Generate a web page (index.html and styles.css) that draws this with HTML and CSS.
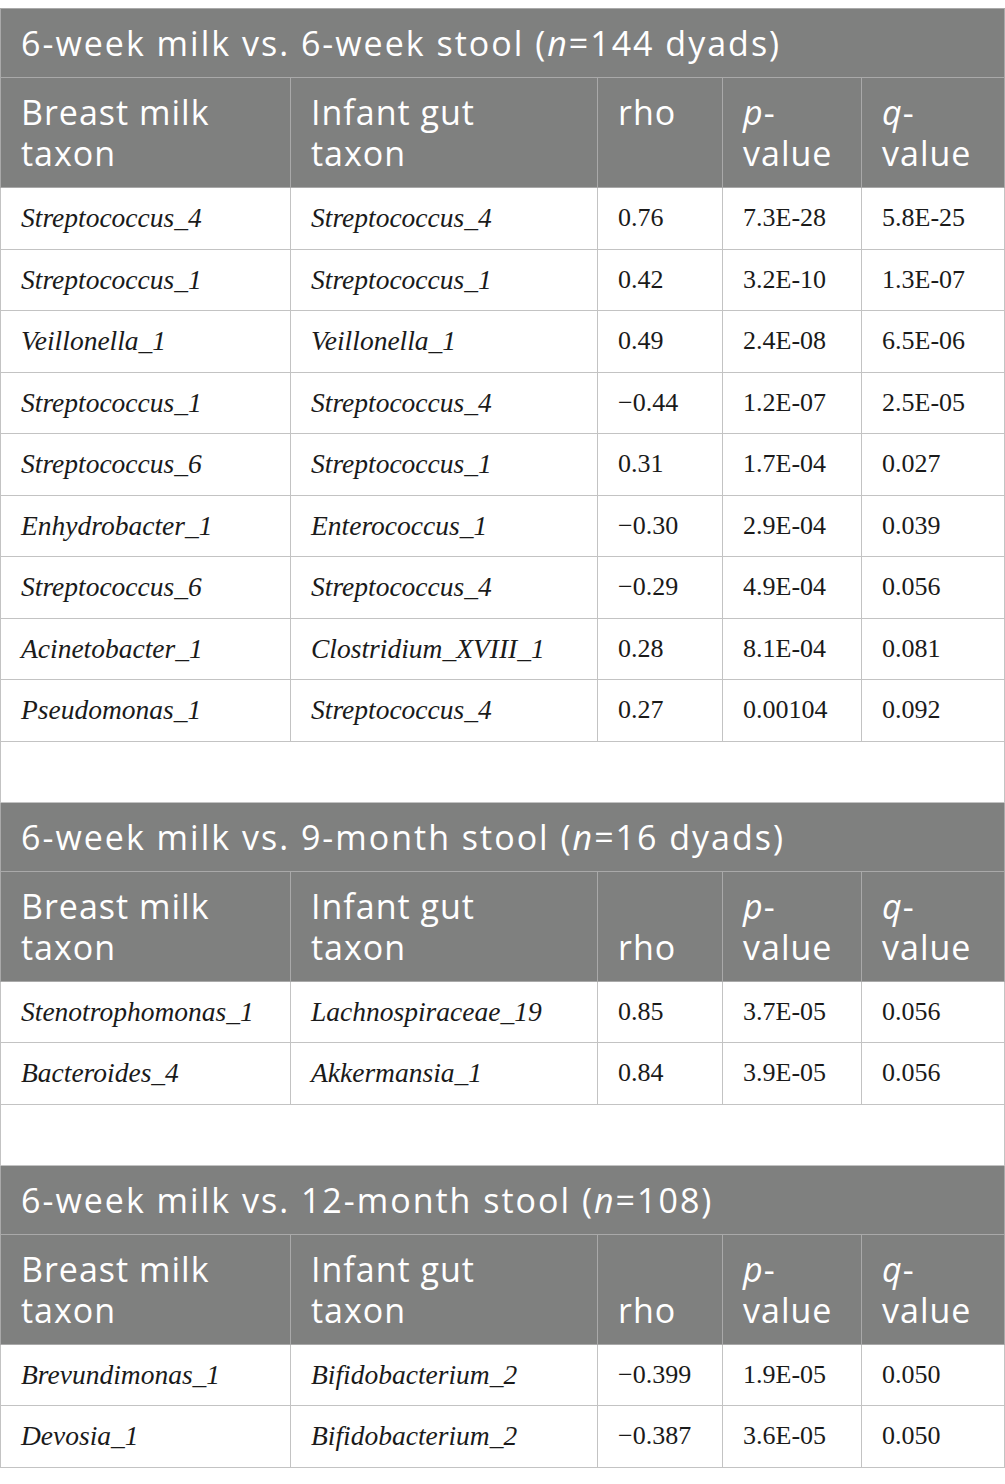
FILE: index.html
```html
<!DOCTYPE html>
<html lang="en">
<head>
    <meta charset="UTF-8">
    <meta name="viewport" content="width=device-width, initial-scale=1.0">
    <title>Milk and stool taxa correlations</title>
    <link rel="stylesheet" href="styles.css">
</head>
<body>

<table class="corr">
    <colgroup>
        <col class="c-milk">
        <col class="c-gut">
        <col class="c-rho">
        <col class="c-p">
        <col class="c-q">
    </colgroup>

    <!-- 6 weeks -->
    <tbody>
        <tr class="title"><th colspan="5">6-week milk vs. 6-week stool (<i>n</i>=144 dyads)</th></tr>
        <tr class="cols">
            <th>Breast milk<br>taxon</th>
            <th>Infant gut<br>taxon</th>
            <th>rho</th>
            <th><i>p</i>-<br>value</th>
            <th><i>q</i>-<br>value</th>
        </tr>
        <tr><td><i>Streptococcus_4</i></td><td><i>Streptococcus_4</i></td><td>0.76</td><td>7.3E-28</td><td>5.8E-25</td></tr>
        <tr><td><i>Streptococcus_1</i></td><td><i>Streptococcus_1</i></td><td>0.42</td><td>3.2E-10</td><td>1.3E-07</td></tr>
        <tr><td><i>Veillonella_1</i></td><td><i>Veillonella_1</i></td><td>0.49</td><td>2.4E-08</td><td>6.5E-06</td></tr>
        <tr><td><i>Streptococcus_1</i></td><td><i>Streptococcus_4</i></td><td>&minus;0.44</td><td>1.2E-07</td><td>2.5E-05</td></tr>
        <tr><td><i>Streptococcus_6</i></td><td><i>Streptococcus_1</i></td><td>0.31</td><td>1.7E-04</td><td>0.027</td></tr>
        <tr><td><i>Enhydrobacter_1</i></td><td><i>Enterococcus_1</i></td><td>&minus;0.30</td><td>2.9E-04</td><td>0.039</td></tr>
        <tr><td><i>Streptococcus_6</i></td><td><i>Streptococcus_4</i></td><td>&minus;0.29</td><td>4.9E-04</td><td>0.056</td></tr>
        <tr><td><i>Acinetobacter_1</i></td><td><i>Clostridium_XVIII_1</i></td><td>0.28</td><td>8.1E-04</td><td>0.081</td></tr>
        <tr><td><i>Pseudomonas_1</i></td><td><i>Streptococcus_4</i></td><td>0.27</td><td>0.00104</td><td>0.092</td></tr>
        <tr class="gap"><td colspan="5"></td></tr>
    </tbody>

    <!-- 9 months -->
    <tbody>
        <tr class="title"><th colspan="5">6-week milk vs. 9-month stool (<i>n</i>=16 dyads)</th></tr>
        <tr class="cols">
            <th>Breast milk<br>taxon</th>
            <th>Infant gut<br>taxon</th>
            <th class="low">rho</th>
            <th><i>p</i>-<br>value</th>
            <th><i>q</i>-<br>value</th>
        </tr>
        <tr><td><i>Stenotrophomonas_1</i></td><td><i>Lachnospiraceae_19</i></td><td>0.85</td><td>3.7E-05</td><td>0.056</td></tr>
        <tr><td><i>Bacteroides_4</i></td><td><i>Akkermansia_1</i></td><td>0.84</td><td>3.9E-05</td><td>0.056</td></tr>
        <tr class="gap"><td colspan="5"></td></tr>
    </tbody>

    <!-- 12 months -->
    <tbody>
        <tr class="title"><th colspan="5">6-week milk vs. 12-month stool (<i>n</i>=108)</th></tr>
        <tr class="cols">
            <th>Breast milk<br>taxon</th>
            <th>Infant gut<br>taxon</th>
            <th class="low">rho</th>
            <th><i>p</i>-<br>value</th>
            <th><i>q</i>-<br>value</th>
        </tr>
        <tr><td><i>Brevundimonas_1</i></td><td><i>Bifidobacterium_2</i></td><td>&minus;0.399</td><td>1.9E-05</td><td>0.050</td></tr>
        <tr><td><i>Devosia_1</i></td><td><i>Bifidobacterium_2</i></td><td>&minus;0.387</td><td>3.6E-05</td><td>0.050</td></tr>
    </tbody>
</table>

</body>
</html>
```

FILE: styles.css
```css
body {
    margin: 8px 0 0;
    background-color: #fff;
}
.corr {
    width: 1004px;
    border-collapse: collapse;
    table-layout: fixed;
}
.c-milk { width: 290px; }
.c-gut { width: 307px; }
.c-rho { width: 125px; }
.c-p { width: 139px; }
.c-q { width: 143px; }

.corr th {
    background-color: #7f807f;
    color: #fff;
    font-family: "Open Sans", Arial, sans-serif;
    font-weight: 400;
    font-size: 34px;
    letter-spacing: 1px;
    line-height: 41px;
    text-align: left;
    vertical-align: top;
    border: 1px solid #a9a9a9;
    padding: 14px 20px 13px;
}
.corr .title th {
    height: 41px;
    letter-spacing: 2px;
}
.corr .cols th {
    height: 82px;
}
.corr th.low {
    vertical-align: bottom;
}
.corr td {
    font-family: "Liberation Serif", "Times New Roman", serif;
    font-size: 26px;
    color: #1a1a1a;
    border: 1px solid #c3c3c3;
    padding: 0 20px;
    height: 60.5px;
    vertical-align: middle;
    white-space: nowrap;
}
.corr td i {
    font-size: 27.5px;
}
.corr .gap td {
    height: 60px;
    border-left: 1px solid #c3c3c3;
    border-right: 1px solid #c3c3c3;
}
```
